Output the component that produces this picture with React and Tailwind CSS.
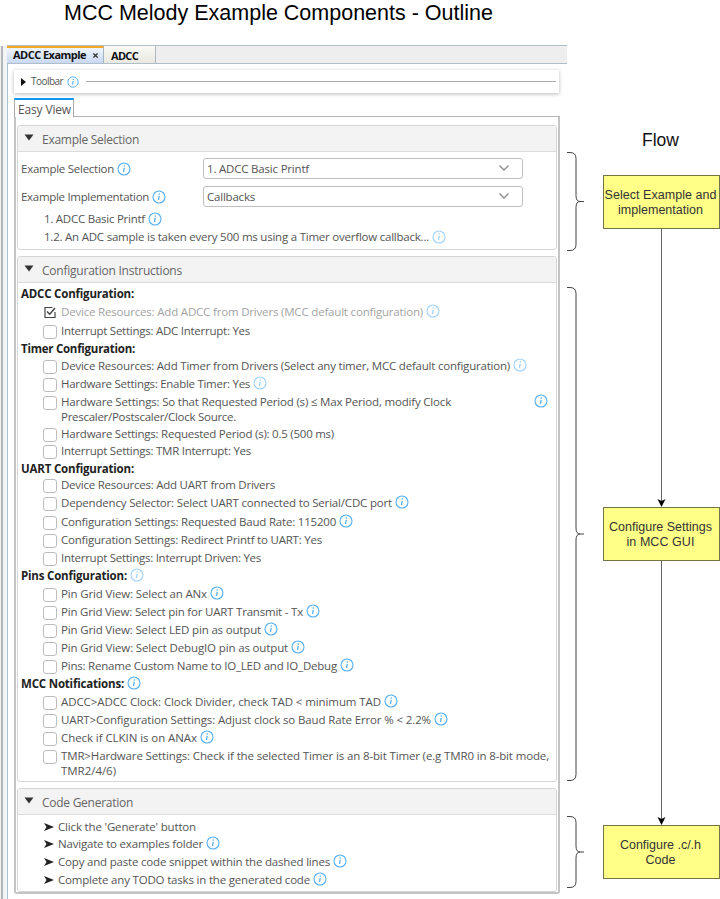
import { useLayoutEffect, useRef } from "react";

// Inline text spread over a fixed width by adjusting its letter spacing.
function Fit({ w, className = "", children }) {
  const ref = useRef(null);
  useLayoutEffect(() => {
    const el = ref.current;
    el.style.letterSpacing = "0px";
    const natural = el.getBoundingClientRect().width;
    el.style.letterSpacing = `${(w - natural) / el.textContent.length}px`;
  }, [w, children]);
  return (
    <span ref={ref} className={`inline-block shrink-0 whitespace-nowrap ${className}`}>
      {children}
    </span>
  );
}

function Info({ light = false, size = "h-[14px] w-[14px]", className = "" }) {
  return (
    <svg viewBox="0 0 14 14" className={`shrink-0 ${size} ${light ? "text-[#9fd2fb]" : "text-[#55aff5]"} ${className}`} fill="none" stroke="currentColor">
      <circle cx="7" cy="7" r="6" strokeWidth="1.1" />
      <path d="M7.2 5.8 6.5 10" strokeWidth="1.3" />
      <path d="M7.4 3.4 7.2 4.700" strokeWidth="1.4" />
    </svg>
  );
}

function Box({ checked }) {
  if (checked)
    return (
      <svg viewBox="0 0 14 14" className="mt-[2px] h-[14px] w-[14px] shrink-0" fill="none" stroke="#444">
        <path d="M9.500 2.500H2v10h10V7" strokeWidth="1.2" />
        <path d="M4 6.500 6.700 9.200 12 3" strokeWidth="1.5" />
      </svg>
    );
  return <span className="mt-[3px] h-[14px] w-[14px] shrink-0 rounded-[3px] border border-[#bdbdbd] bg-white" />;
}

function Section({ title, w, className, children }) {
  return (
    <section className={`w-[540px] shrink-0 overflow-hidden rounded-[3px] border border-[#d6d6d6] bg-white ${className}`}>
      <header className="flex h-[26px] items-center border-b border-[#dcdcdc] bg-[#f3f3f3] pl-[6px] pt-[2px]">
        <svg viewBox="0 0 10 7" className="-mt-[4px] h-[7px] w-[10px]"><path d="M.5.5h9L5 6.500z" fill="#333" /></svg>
        <Fit w={w} className="ml-[8px] text-[12px] text-[#666]">{title}</Fit>
      </header>
      {children}
    </section>
  );
}

function Select({ w, children }) {
  return (
    <div className="-mt-[2px] flex h-[21px] w-[320px] items-center rounded-[3px] border border-[#bfbfbf] bg-white pl-[3px] pr-[12px]">
      <Fit w={w} className="pt-px">{children}</Fit>
      <svg viewBox="0 0 12 8" className="ml-auto h-[8px] w-[12px]" fill="none" stroke="#8d8d8d" strokeWidth="1.4"><path d="M1.500 1.500 6 6l4.500-4.500" /></svg>
    </div>
  );
}

const steps = [
  { head: "ADCC Configuration:", w: 113, h: "h-[18px]" },
  { text: "Device Resources: Add ADCC from Drivers (MCC default configuration)", w: 362, h: "h-[19px]", checked: true, info: "light" },
  { text: "Interrupt Settings: ADC Interrupt: Yes", w: 189, h: "h-[18px]" },
  { head: "Timer Configuration:", w: 114, h: "h-[17px]" },
  { text: "Device Resources: Add Timer from Drivers (Select any timer, MCC default configuration)", w: 449, h: "h-[18px]", info: "light" },
  { text: "Hardware Settings: Enable Timer: Yes", w: 189, h: "h-[18px]", info: "light" },
  { text: "Hardware Settings: So that Requested Period (s) ≤ Max Period, modify Clock", w: 390, text2: "Prescaler/Postscaler/Clock Source.", w2: 175, h: "h-[32px]", info: "far" },
  { text: "Hardware Settings: Requested Period (s): 0.5 (500 ms)", w: 273, h: "h-[17px]" },
  { text: "Interrupt Settings: TMR Interrupt: Yes", w: 190, h: "h-[18px]" },
  { head: "UART Configuration:", w: 113, h: "h-[16px]" },
  { text: "Device Resources: Add UART from Drivers", w: 214, h: "h-[18px]" },
  { text: "Dependency Selector: Select UART connected to Serial/CDC port", w: 331, h: "h-[19px]", info: "normal" },
  { text: "Configuration Settings: Requested Baud Rate: 115200", w: 275, h: "h-[18px]", info: "normal" },
  { text: "Configuration Settings: Redirect Printf to UART: Yes", w: 261, h: "h-[18px]" },
  { text: "Interrupt Settings: Interrupt Driven: Yes", w: 200, h: "h-[18px]" },
  { head: "Pins Configuration:", w: 106, h: "h-[18px]", info: "light" },
  { text: "Pin Grid View: Select an ANx", w: 146, h: "h-[18px]", info: "normal" },
  { text: "Pin Grid View: Select pin for UART Transmit - Tx", w: 242, h: "h-[18px]", info: "normal" },
  { text: "Pin Grid View: Select LED pin as output", w: 200, h: "h-[18px]", info: "normal" },
  { text: "Pin Grid View: Select DebugIO pin as output", w: 227, h: "h-[18px]", info: "normal" },
  { text: "Pins: Rename Custom Name to IO_LED and IO_Debug", w: 276, h: "h-[18px]", info: "normal" },
  { head: "MCC Notifications:", w: 103, h: "h-[18px]", info: "normal" },
  { text: "ADCC>ADCC Clock: Clock Divider, check TAD < minimum TAD", w: 320, h: "h-[18px]", info: "normal" },
  { text: "UART>Configuration Settings: Adjust clock so Baud Rate Error % < 2.2%", w: 370, h: "h-[18px]", info: "normal" },
  { text: "Check if CLKIN is on ANAx", w: 136, h: "h-[18px]", info: "normal" },
  { text: "TMR>Hardware Settings: Check if the selected Timer is an 8-bit Timer (e.g TMR0 in 8-bit mode,", w: 488, text2: "TMR2/4/6)", w2: 55, h: "h-[34px]" },
];

function Step({ s }) {
  if (s.head)
    return (
      <div className={`flex shrink-0 items-start pl-[3px] ${s.h}`}>
        <Fit w={s.w} className="font-bold leading-[18px] text-[#222]">{s.head}</Fit>
        {s.info && <Info light={s.info === "light"} className="ml-[3px] mt-[1px]" />}
      </div>
    );
  return (
    <div className={`flex shrink-0 items-start pl-[25px] ${s.h}`}>
      <Box checked={s.checked} />
      <div className={`ml-[4px] flex flex-col pt-[1px] leading-[15px] ${s.checked ? "text-[#a3a3a3]" : ""}`}>
        <Fit w={s.w}>{s.text}</Fit>
        {s.text2 && <Fit w={s.w2} className="self-start">{s.text2}</Fit>}
      </div>
      {s.info && <Info light={s.info === "light"} className={`mt-[1px] ${s.info === "far" ? "ml-[83px]" : "ml-[3px]"}`} />}
    </div>
  );
}

const tasks = [
  { text: "Click the 'Generate' button", w: 138, h: "h-[17px]" },
  { text: "Navigate to examples folder", w: 145, h: "h-[18px]", info: true },
  { text: "Copy and paste code snippet within the dashed lines", w: 272, h: "h-[18px]", info: true },
  { text: "Complete any TODO tasks in the generated code", w: 252, h: "h-[18px]", info: true },
];

function Brace({ h, className = "" }) {
  const m = h / 2;
  return (
    <svg width="18" height={h} viewBox={`0 0 18 ${h}`} className={`shrink-0 ${className}`} fill="none" stroke="#444" strokeWidth="1">
      <path d={`M0 .5H3Q9 .5 9 6.500V${m - 6}Q9 ${m} 13 ${m}H17M13 ${m}Q9 ${m} 9 ${m + 6}V${h - 6.5}Q9 ${h - 0.5} 3 ${h - 0.5}H0`} />
    </svg>
  );
}

function FlowBox({ lines }) {
  return (
    <div className="flex h-[54px] w-[117px] shrink-0 flex-col items-center justify-center border border-[#75754a] bg-[#ffff88] pr-[2px] pt-[2px] text-[12.5px] leading-[15px] text-[#333]">
      {lines.map(([t, w]) => <Fit key={t} w={w}>{t}</Fit>)}
    </div>
  );
}

function Arrow({ h }) {
  return (
    <svg width="10" height={h} viewBox={`0 0 10 ${h}`} className="mr-[2px] shrink-0">
      <path d={`M5.500 0V${h - 4}`} stroke="#666" fill="none" />
      <path d={`M5.500 ${h}L1.500 ${h - 8}L5.500 ${h - 6}L9.500 ${h - 8}Z`} fill="#000" />
    </svg>
  );
}

export default function App() {
  return (
    <div className="flex h-[899px] w-[720px] flex-col overflow-hidden bg-white font-['Liberation_Sans',Arial,sans-serif]">
      <h1 className="h-[45px] shrink-0 pl-[64px] text-[21.5px] leading-[27px] text-black"><Fit w={429}>MCC Melody Example Components - Outline</Fit></h1>
      <div className="flex min-h-0 flex-1">
        <div className="mt-[1px] w-[3px] shrink-0 border-r-2 border-[#b3b6b9] bg-[#f0f0f0]" />
        <div className="w-[4px] shrink-0 bg-[#f3f4f5]" />
        <main className="flex w-[560px] shrink-0 flex-col font-['Open_Sans','Noto_Sans',sans-serif] text-[11.5px] text-[#555]">
          <div className="flex h-[19px] shrink-0 border-b border-t border-[#aebfcb] bg-[#eeeeee]">
            <div className="flex w-[97px] items-center border-r border-t-2 border-r-[#a5b5c4] border-t-[#f5a623] bg-gradient-to-b from-[#f0f5fd] to-[#c9d8f2] pl-[6px] font-bold text-[#111]">
              <Fit w={73} className="text-[11px]">ADCC Example</Fit>
              <svg viewBox="0 0 6 6" className="ml-[7px] h-[5px] w-[5px]" stroke="#333" strokeWidth="1.5"><path d="M.5.5l5 5M5.500.5l-5 5" /></svg>
            </div>
            <div className="flex w-[52px] items-center border-r border-[#a9b8c3] bg-gradient-to-b from-[#fafaf7] to-[#e9e8e0] pl-[7px] pt-[3px] font-bold text-[#111]">
              <Fit w={27} className="text-[11px]">ADCC</Fit>
            </div>
          </div>
          <div className="flex min-h-0 flex-1 flex-col border-l border-[#a9c0d8] pl-[6px]">
            <div className="mt-[6px] flex h-[23px] w-[545px] shrink-0 items-center bg-white pl-[7px] pr-[3px] shadow-[0_1px_4px_rgba(0,0,0,0.28)]">
              <svg viewBox="0 0 5 8" className="h-[8px] w-[5px]"><path d="M0 0 5 4 0 8z" fill="#111" /></svg>
              <Fit w={32} className="ml-[5px] text-[10px]">Toolbar</Fit>
              <Info size="h-[12px] w-[12px]" className="ml-[4px]" />
              <span className="ml-[7px] h-px flex-1 bg-[#aaaaaa]" />
            </div>
            <div className="mt-[5px] flex h-[19px] shrink-0">
              <div className="flex w-[60px] items-center justify-center border-l border-r border-t-2 border-[#a8a8a8] border-t-[#1296f3] bg-white pl-px pt-[3px] text-[12px]"><Fit w={53}>Easy View</Fit></div>
              <div className="w-[486px] border-b border-[#b5b5b5]" />
            </div>
            <div className="flex h-[777px] w-[546px] shrink-0 flex-col rounded-b-[3px] border-2 border-t-0 border-[#c4c4c4] pl-px pt-[8px]">
              <Section title="Example Selection" w={97} className="h-[125px]">
                <div className="flex h-[28px] items-center pl-[3px] pt-[6px]">
                  <div className="flex w-[182px] items-center"><Fit w={93}>Example Selection</Fit><Info className="ml-[3px]" /></div>
                  <Select w={102}>1. ADCC Basic Printf</Select>
                </div>
                <div className="flex h-[28px] items-center pl-[3px] pt-[6px]">
                  <div className="flex w-[182px] items-center"><Fit w={128}>Example Implementation</Fit><Info className="ml-[3px]" /></div>
                  <Select w={48}>Callbacks</Select>
                </div>
                <div className="mt-[2px] flex h-[18px] items-center pl-[26px]"><Fit w={101}>1. ADCC Basic Printf</Fit><Info className="ml-[3px]" /></div>
                <div className="flex h-[18px] items-center pl-[26px]"><Fit w={385}>1.2. An ADC sample is taken every 500 ms using a Timer overflow callback...</Fit><Info light className="ml-[3px]" /></div>
              </Section>
              <Section title="Configuration Instructions" w={140} className="mt-[6px] h-[526px]">
                <div className="flex flex-col pt-[2px]">{steps.map((s, i) => <Step key={i} s={s} />)}</div>
              </Section>
              <Section title="Code Generation" w={91} className="mt-[6px] h-[104px]">
                <div className="flex flex-col pt-[3px]">
                  {tasks.map((t) => (
                    <div key={t.text} className={`flex items-start pl-[26px] leading-[18px] ${t.h}`}>
                      <svg viewBox="0 0 10 8" className="mt-[5px] h-[8px] w-[10px] shrink-0"><path d="M0 0 10 4 0 8 2.500 4z" fill="#222" /></svg>
                      <Fit w={t.w} className="ml-[4px]">{t.text}</Fit>
                      {t.info && <Info className="ml-[3px] mt-[1px]" />}
                    </div>
                  ))}
                </div>
              </Section>
            </div>
          </div>
        </main>
        <div className="flex w-[36px] shrink-0 flex-col">
          <Brace h={99} className="mt-[107px]" />
          <Brace h={494} className="mt-[36px]" />
          <Brace h={72} className="mt-[35px]" />
        </div>
        <div className="flex w-[117px] shrink-0 flex-col items-center">
          <div className="mt-[83px] h-[47px] pr-[2px] text-[17.5px] leading-[24px] text-[#111]"><Fit w={37}>Flow</Fit></div>
          <FlowBox lines={[["Select Example and", 112], ["implementation", 85]]} />
          <Arrow h={278} />
          <FlowBox lines={[["Configure Settings", 103], ["in MCC GUI", 68]]} />
          <Arrow h={264} />
          <FlowBox lines={[["Configure .c/.h", 81], ["Code", 30]]} />
        </div>
      </div>
    </div>
  );
}
